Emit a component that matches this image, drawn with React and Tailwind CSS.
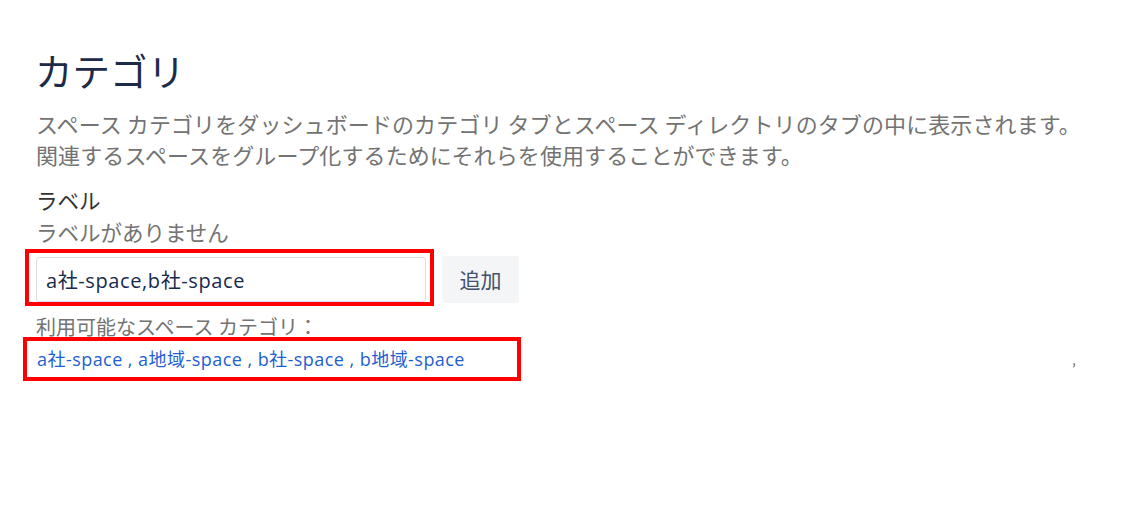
import React from 'react';

const jp = { fontFamily: '"Noto Sans CJK JP", "Noto Sans", sans-serif' };
const mixed = { fontFamily: '"Open Sans", "Noto Sans CJK JP", sans-serif' };

const categories = ['a社-space', 'a地域-space', 'b社-space', 'b地域-space'];

const App = () => {
  const [value, setValue] = React.useState('a社-space,b社-space');

  return (
    <div className="w-[1124px] h-[530px] bg-white pl-9 pr-[44px] pt-[44px]" style={jp}>
      <h1 className="text-[37.5px] leading-[52px] text-[#1c2b48] font-normal -ml-[1px]">カテゴリ</h1>

      <p className="mt-[12px] text-[22px] leading-[31px] text-[#737373] whitespace-nowrap tracking-[0.1px]">
        スペース カテゴリをダッシュボードのカテゴリ タブとスペース ディレクトリのタブの中に表示されます。
        <br />
        関連するスペースをグループ化するためにそれらを使用することができます。
      </p>

      <div className="mt-[14px]">
        <div className="text-[21.5px] leading-[32px] text-[#333333]">ラベル</div>
        <div className="text-[21.5px] leading-[32px] text-[#737373]">ラベルがありません</div>
      </div>

      <div className="mt-[8px] flex items-center gap-4">
        <div className="relative">
          <input
            value={value}
            onChange={(e) => setValue(e.target.value)}
            className="w-[390px] h-[45px] rounded-[3px] border border-[#dcdfe4] px-[9px] text-[20px] tracking-[0.6px] text-[#172b4d] outline-none"
            style={mixed}
          />
          <div className="absolute -left-[11px] -top-[8px] w-[409px] h-[57px] border-4 border-[#ff0000] pointer-events-none" />
        </div>
        <button
          type="button"
          className="w-[77px] h-[47px] rounded-[3px] bg-[#f4f5f7] text-[21px] text-[#42526e]"
          style={jp}
        >
          追加
        </button>
      </div>

      <div className="mt-[8px] text-[20px] leading-[32px] text-[#737373]">利用可能なスペース カテゴリ：</div>

      <div className="mt-[1px] flex items-center justify-between pr-[4px]">
        <div className="relative">
          <div className="text-[18px] leading-[30px] tracking-[0.45px] text-[#1f5fd1] pl-[1px]" style={mixed}>
            {categories.map((c, i) => (
              <React.Fragment key={c}>
                <a className="cursor-pointer">{c}</a>
                {i < categories.length - 1 && ' , '}
              </React.Fragment>
            ))}
          </div>
          <div className="absolute -left-[13px] -top-[7px] w-[498px] h-[44px] border-4 border-[#ff0000] pointer-events-none" />
        </div>
        <span className="text-[14px] text-[#737373]">,</span>
      </div>
    </div>
  );
};

export default App;
